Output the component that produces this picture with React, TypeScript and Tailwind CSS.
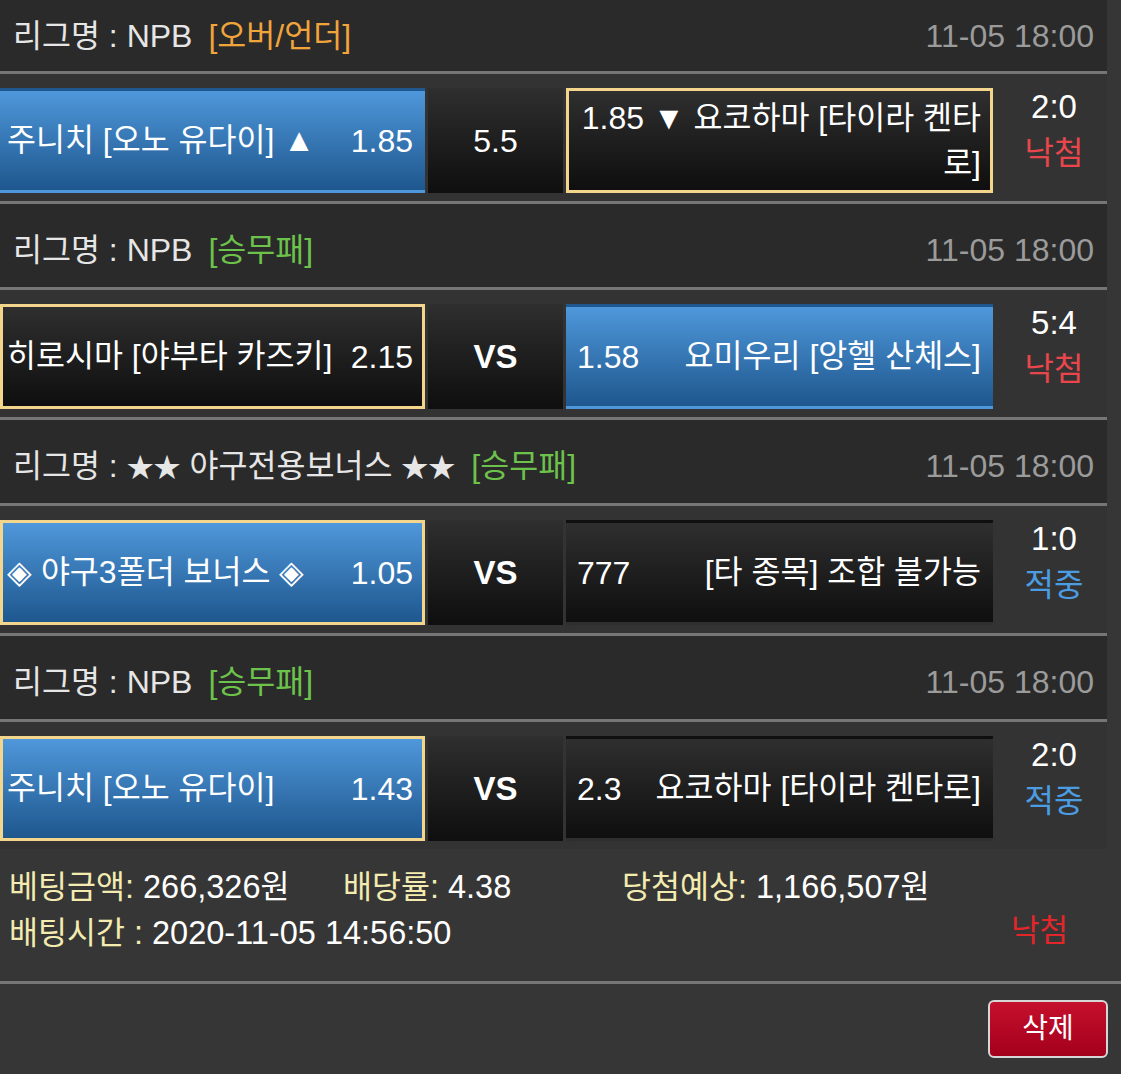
import React from "react";

// 한글 구간은 라틴보다 아주 조금 작게, ★ 은 더 작게
const SPLIT = /([\u3131-\u318E\uAC00-\uD7A3]+|★+)/;
const HANGUL = /^[\u3131-\u318E\uAC00-\uD7A3]+$/;

function T({ s, k = "text-[31.5px]" }: { s: string; k?: string }) {
    return (
        <>
            {s.split(SPLIT).map((p, i) =>
                HANGUL.test(p) ? (
                    <span key={i} className={k}>
                        {p}
                    </span>
                ) : p.startsWith("★") ? (
                    <span key={i} className="text-[27px]">
                        {p}
                    </span>
                ) : (
                    <React.Fragment key={i}>{p}</React.Fragment>
                )
            )}
        </>
    );
}

type Side = {
    name: string;
    odds: string;
    blue?: boolean;
    picked?: boolean;
};

type Game = {
    tag: string;
    tagColor: string;
    time: string;
    league: string;
    home: Side;
    mid: string;
    midBold?: boolean;
    away: Side;
    awayLines?: string[];
    score: string;
    result: "낙첨" | "적중";
};

const games: Game[] = [
    {
        league: "NPB",
        tag: "[오버/언더]",
        tagColor: "text-[#f0a43c]",
        time: "11-05 18:00",
        home: { name: "주니치 [오노 유다이] ▲", odds: "1.85", blue: true },
        mid: "5.5",
        away: { name: "", odds: "", picked: true },
        awayLines: ["1.85 ▼ 요코하마 [타이라 켄타", "로]"],
        score: "2:0",
        result: "낙첨",
    },
    {
        league: "NPB",
        tag: "[승무패]",
        tagColor: "text-[#6dc24b]",
        time: "11-05 18:00",
        home: { name: "히로시마 [야부타 카즈키]", odds: "2.15", picked: true },
        mid: "VS",
        midBold: true,
        away: { name: "요미우리 [앙헬 산체스]", odds: "1.58", blue: true },
        score: "5:4",
        result: "낙첨",
    },
    {
        league: "★★ 야구전용보너스 ★★",
        tag: "[승무패]",
        tagColor: "text-[#6dc24b]",
        time: "11-05 18:00",
        home: { name: "◈ 야구3폴더 보너스 ◈", odds: "1.05", blue: true, picked: true },
        mid: "VS",
        midBold: true,
        away: { name: "[타 종목] 조합 불가능", odds: "777" },
        score: "1:0",
        result: "적중",
    },
    {
        league: "NPB",
        tag: "[승무패]",
        tagColor: "text-[#6dc24b]",
        time: "11-05 18:00",
        home: { name: "주니치 [오노 유다이]", odds: "1.43", blue: true, picked: true },
        mid: "VS",
        midBold: true,
        away: { name: "요코하마 [타이라 켄타로]", odds: "2.3" },
        score: "2:0",
        result: "적중",
    },
];

function boxClass(s: Side) {
    const bg = s.blue
        ? "bg-linear-to-b from-[#4f98db] to-[#1e578e]"
        : "bg-linear-to-b from-[#2f2f2f] to-[#0f0f0f]";
    const border = s.picked ? "border-[3px] border-[#f3d58c]" : "border-[3px] border-transparent";
    return `${bg} ${border} h-[105px] flex items-center text-white text-[32px]`;
}

function Header({ g, first }: { g: Game; first?: boolean }) {
    return (
        <div
            className={`${first ? "h-[71px] pt-[18px]" : "h-[83px] pt-[28px]"} bg-[#2a2a2a] flex items-start justify-between pl-[13px] pr-[13px]`}
        >
            <div className="leading-[36px] text-[32px] text-[#e6e6e6] whitespace-nowrap">
                <T s={`리그명 : ${g.league}`} />
                <span className={`ml-[16px] ${g.tagColor}`}>
                    <T s={g.tag} />
                </span>
            </div>
            <div className="leading-[36px] text-[32px] text-[#9b9b9b]">{g.time}</div>
        </div>
    );
}

function Row({ g }: { g: Game }) {
    return (
        <div className="h-[127px] bg-[#333333] flex pt-[14px]">
            <div className={`${boxClass(g.home)} w-[425px] justify-between pl-[4px] pr-[9px]`}>
                <span className="whitespace-nowrap">
                    <T s={g.home.name} />
                </span>
                <span>{g.home.odds}</span>
            </div>
            <div className="ml-[3px] w-[135px] h-[105px] bg-linear-to-b from-[#2f2f2f] to-[#0f0f0f] flex items-center justify-center text-white text-[32px]">
                <span className={g.midBold ? "font-bold text-[33px]" : ""}>{g.mid}</span>
            </div>
            <div className={`${boxClass(g.away)} ml-[3px] w-[427px] justify-between pl-[8px] pr-[9px]`}>
                {g.awayLines ? (
                    <div className="w-full text-right leading-[45px] whitespace-nowrap">
                        <T s={g.awayLines[0]} />
                        <br />
                        <T s={g.awayLines[1]} />
                    </div>
                ) : (
                    <>
                        <span>{g.away.odds}</span>
                        <span className="whitespace-nowrap">
                            <T s={g.away.name} />
                        </span>
                    </>
                )}
            </div>
            <div className="w-[114px] flex flex-col items-center -mt-[4px] pl-[8px] text-[33px] leading-[46px]">
                <span className="text-white">{g.score}</span>
                <span className={g.result === "낙첨" ? "text-[#e8464c]" : "text-[#4c9ce2]"}>
                    <T s={g.result} k="text-[32px]" />
                </span>
            </div>
        </div>
    );
}

const FK = "text-[31.5px]";

export default function App() {
    return (
        <div className="min-h-[1074px] bg-[#363636] font-['Liberation_Sans','Noto_Sans_CJK_KR',sans-serif] overflow-hidden">
            <div className="w-[1107px]">
                {games.map((g, i) => (
                    <div key={i}>
                        {i > 0 && <div className="h-[3px] bg-[#767676]" />}
                        <Header g={g} first={i === 0} />
                        <div className="h-[3px] bg-[#767676]" />
                        <Row g={g} />
                    </div>
                ))}
            </div>

            {/* 하단 요약 */}
            <div className="h-[132px] pl-[9px] pt-[15px] text-[32.5px] leading-[46px]">
                <div className="flex whitespace-nowrap">
                    <div className="w-[334px]">
                        <span className="text-[#f3ebb0]">
                            <T s="베팅금액:" k={FK} />
                        </span>
                        <span className="text-white">
                            {" "}
                            <T s="266,326원" k={FK} />
                        </span>
                    </div>
                    <div className="w-[279px]">
                        <span className="text-[#f3ebb0]">
                            <T s="배당률:" k={FK} />
                        </span>
                        <span className="text-white"> 4.38</span>
                    </div>
                    <div>
                        <span className="text-[#f3ebb0]">
                            <T s="당첨예상:" k={FK} />
                        </span>
                        <span className="text-white">
                            {" "}
                            <T s="1,166,507원" k={FK} />
                        </span>
                    </div>
                </div>
                <div className="flex items-center whitespace-nowrap pr-[53px]">
                    <span className="text-[#f3ebb0]">
                        <T s="배팅시간 :" k={FK} />
                    </span>
                    <span className="text-white">&nbsp;2020-11-05 14:56:50</span>
                    <span className="ml-auto text-[#e2262a] -mt-[6px]">
                        <T s="낙첨" k="text-[31px]" />
                    </span>
                </div>
            </div>
            <div className="h-[3px] bg-[#767676]" />
            <div className="flex justify-end pr-[13px] pt-[16px]">
                <button
                    type="button"
                    className="w-[120px] h-[58px] rounded-[6px] border-2 border-[#d6d6d6] bg-linear-to-b from-[#c5102c] to-[#a4001c] text-white text-[28px]"
                >
                    삭제
                </button>
            </div>
        </div>
    );
}
